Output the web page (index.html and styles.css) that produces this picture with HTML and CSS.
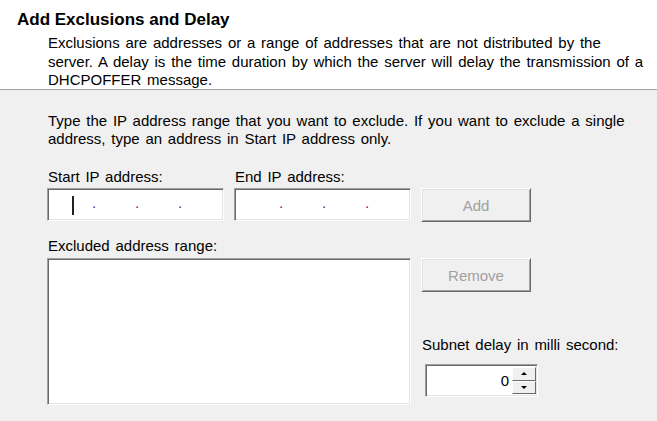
FILE: index.html
```html
<!DOCTYPE html>
<html lang="en">
<head>
    <meta charset="UTF-8">
    <title>Add Exclusions and Delay</title>
    <link rel="stylesheet" href="styles.css">
</head>
<body>

<div class="header">
    <div class="title">Add Exclusions and Delay</div>
    <p class="desc">Exclusions are addresses or a range of addresses that are not distributed by the<br>server. A delay is the time duration by which the server will delay the transmission of a<br>DHCPOFFER message.</p>
</div>

<div class="page">
    <p class="intro">Type the IP address range that you want to exclude. If you want to exclude a single<br>address, type an address in Start IP address only.</p>

    <div class="range">
        <label class="field-label">Start IP address:</label>
        <label class="field-label">End IP address:</label>
        <span></span>

        <div class="ip">
            <span class="seg"><span class="caret"></span></span>
            <span class="dot">.</span>
            <span class="dot">.</span>
            <span class="dot">.</span>
        </div>
        <div class="ip">
            <span class="seg"></span>
            <span class="dot">.</span>
            <span class="dot">.</span>
            <span class="dot">.</span>
        </div>
        <button class="btn" disabled>Add</button>

        <label class="field-label excluded-label">Excluded address range:</label>

        <div class="listbox"></div>

        <div class="side">
            <button class="btn" disabled>Remove</button>
            <div class="field-label delay-label">Subnet delay in milli second:</div>
            <div class="spin">
                <span class="spin-value">0</span>
                <div class="spin-btns">
                    <span class="spin-btn up"></span>
                    <span class="spin-btn down"></span>
                </div>
            </div>
        </div>
    </div>
</div>

</body>
</html>
```

FILE: styles.css
```css
body {
    margin: 0;
    font-family: 'Liberation Sans', Arial, sans-serif;
    font-size: 15px;
    word-spacing: 1.6px;
    color: #000;
    background-color: #f0f0f0;
}

/* white band at the top */
.header {
    height: 90px;
    box-sizing: border-box;
    background-color: #fff;
    border-bottom: 1px solid #a0a0a0;
    padding: 11px 0 0 17px;
    overflow: hidden;
}

.title {
    font-size: 17px;
    font-weight: bold;
    line-height: 18px;
    word-spacing: 0;
}

.desc {
    margin: 5px 0 0 31px;
    line-height: 18.5px;
}

.page {
    padding: 22px 0 0 47px;
}

.intro {
    margin: 0 0 0 1px;
    line-height: 18px;
}

.range {
    display: grid;
    grid-template-columns: 177px 177px 110px;
    column-gap: 10px;
    align-items: start;
    margin-top: 20px;
}

.field-label {
    line-height: 18px;
    padding-left: 1px;
    margin-bottom: 2px;
    white-space: nowrap;
}

.excluded-label {
    grid-column: 1 / 4;
    margin-top: 15px;
    margin-bottom: 3px;
}

/* sunken 3D edit fields */
.ip, .listbox, .spin {
    background-color: #fff;
    border: 1px solid;
    border-color: #a0a0a0 #fff #fff #a0a0a0;
    box-shadow: inset 1px 1px 0 #696969, inset -1px -1px 0 #e3e3e3;
    box-sizing: border-box;
}

.ip {
    height: 33px;
    display: flex;
    align-items: center;
}

.seg {
    width: 44px;
    height: 100%;
    display: flex;
    align-items: center;
}

.caret {
    width: 2px;
    height: 19px;
    margin-left: 24px;
    margin-top: 1px;
    background-color: #222;
}

.dot {
    width: 43px;
    color: #5a2860;
    line-height: 18px;
    margin-bottom: 3px;
}

.btn {
    height: 34px;
    width: 110px;
    font-family: inherit;
    font-size: 15px;
    color: #a0a0a0;
    background-color: #f0f0f0;
    border: 1px solid;
    border-color: #fff #696969 #696969 #fff;
    box-shadow: inset 1px 1px 0 #e3e3e3, inset -1px -1px 0 #a0a0a0;
    padding: 0;
}

.listbox {
    grid-column: 1 / 3;
    height: 147px;
}

.side {
    display: flex;
    flex-direction: column;
    align-items: flex-start;
}

.delay-label {
    margin-top: 44px;
    margin-bottom: 10px;
}

.spin {
    margin-left: 4px;
    width: 113px;
    height: 33px;
    display: flex;
    justify-content: flex-end;
    align-items: center;
    padding: 2px 1px 2px 2px;
}

.spin-value {
    margin-right: 3px;
    line-height: 18px;
}

.spin-btns {
    width: 24px;
    height: 100%;
    display: flex;
    flex-direction: column;
}

.spin-btn {
    flex: 1;
    background-color: #f0f0f0;
    border: 1px solid;
    border-color: #fff #696969 #696969 #fff;
    display: flex;
    justify-content: center;
    align-items: center;
}

.spin-btn::after {
    content: '';
    border-left: 3px solid transparent;
    border-right: 3px solid transparent;
}

.up::after {
    border-bottom: 3px solid #000;
}

.down::after {
    border-top: 3px solid #000;
}
```
